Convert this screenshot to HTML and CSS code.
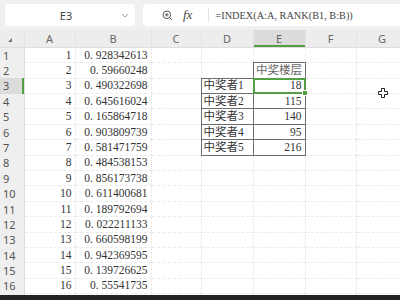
FILE: index.html
```html
<!DOCTYPE html>
<html lang="zh">
<head>
    <meta charset="UTF-8">
    <meta name="viewport" content="width=device-width, initial-scale=1.0">
    <title>中奖楼层</title>
    <link rel="stylesheet" href="styles.css">
</head>
<body>
    <div class="app">
        <div class="toolbar">
            <div class="name-box">
                <span class="cell-ref">E3</span>
                <svg class="chevron" width="8" height="5" viewBox="0 0 8 5"><path d="M1 1l3 3 3-3" fill="none" stroke="#a0a0a0" stroke-width="1"/></svg>
            </div>
            <div class="formula-bar">
                <svg class="zoom-icon" width="11" height="11" viewBox="0 0 11 11">
                    <circle cx="4.8" cy="4.8" r="3.8" fill="none" stroke="#555" stroke-width="1"/>
                    <path d="M3 4.8h3.6M4.8 3v3.6M7.5 7.5l2.5 2.5" fill="none" stroke="#555" stroke-width="1"/>
                </svg>
                <span class="fx">fx</span>
                <span class="divider"></span>
                <span class="formula">=INDEX(A:A, RANK(B1, B:B))</span>
            </div>
        </div>

        <div class="sheet-wrap">
            <table class="sheet">
                <colgroup>
                    <col class="c-head">
                    <col class="c-a">
                    <col class="c-b">
                    <col class="c-c">
                    <col class="c-d">
                    <col class="c-e">
                    <col class="c-f">
                    <col class="c-g">
                </colgroup>
                <thead>
                    <tr>
                        <th class="corner"><span class="corner-mark"></span></th>
                        <th>A</th><th>B</th><th>C</th><th>D</th><th class="active">E</th><th>F</th><th>G</th>
                    </tr>
                </thead>
                <tbody>
                    <tr><th>1</th><td class="num">1</td><td class="num">0. 928342613</td><td></td><td></td><td></td><td></td><td></td></tr>
                    <tr><th>2</th><td class="num">2</td><td class="num">0. 59660248</td><td></td><td></td><td class="box title">中奖楼层</td><td></td><td></td></tr>
                    <tr><th class="active">3</th><td class="num">3</td><td class="num">0. 490322698</td><td></td><td class="box">中奖者1</td><td class="box num sel">18</td><td></td><td></td></tr>
                    <tr><th>4</th><td class="num">4</td><td class="num">0. 645616024</td><td></td><td class="box">中奖者2</td><td class="box num">115</td><td></td><td></td></tr>
                    <tr><th>5</th><td class="num">5</td><td class="num">0. 165864718</td><td></td><td class="box">中奖者3</td><td class="box num">140</td><td></td><td></td></tr>
                    <tr><th>6</th><td class="num">6</td><td class="num">0. 903809739</td><td></td><td class="box">中奖者4</td><td class="box num">95</td><td></td><td></td></tr>
                    <tr><th>7</th><td class="num">7</td><td class="num">0. 581471759</td><td></td><td class="box">中奖者5</td><td class="box num">216</td><td></td><td></td></tr>
                    <tr><th>8</th><td class="num">8</td><td class="num">0. 484538153</td><td></td><td></td><td></td><td></td><td></td></tr>
                    <tr><th>9</th><td class="num">9</td><td class="num">0. 856173738</td><td></td><td></td><td></td><td></td><td></td></tr>
                    <tr><th>10</th><td class="num">10</td><td class="num">0. 611400681</td><td></td><td></td><td></td><td></td><td></td></tr>
                    <tr><th>11</th><td class="num">11</td><td class="num">0. 189792694</td><td></td><td></td><td></td><td></td><td></td></tr>
                    <tr><th>12</th><td class="num">12</td><td class="num">0. 022211133</td><td></td><td></td><td></td><td></td><td></td></tr>
                    <tr><th>13</th><td class="num">13</td><td class="num">0. 660598199</td><td></td><td></td><td></td><td></td><td></td></tr>
                    <tr><th>14</th><td class="num">14</td><td class="num">0. 942369595</td><td></td><td></td><td></td><td></td><td></td></tr>
                    <tr><th>15</th><td class="num">15</td><td class="num">0. 139726625</td><td></td><td></td><td></td><td></td><td></td></tr>
                    <tr><th>16</th><td class="num">16</td><td class="num">0. 55541735</td><td></td><td></td><td></td><td></td><td></td></tr>
                    <tr><th></th><td></td><td></td><td></td><td></td><td></td><td></td><td></td></tr>
                </tbody>
            </table>

            <svg class="cursor" width="10" height="10" viewBox="0 0 10 10">
                <path d="M3.5 0.5h3v3h3v3h-3v3h-3v-3h-3v-3h3z" fill="#fff" stroke="#222" stroke-width="1"/>
            </svg>
        </div>

        <div class="bottom-edge"></div>
    </div>
</body>
</html>
```

FILE: styles.css
```css
/* Reset */
* {
    margin: 0;
    padding: 0;
    box-sizing: border-box;
}

:root {
    --bar-bg: #f0f0f0;
    --head-bg: #ededed;
    --active-bg: #dcdcdc;
    --grid-line: #ebebeb;
    --box-line: #6e6e6e;
    --green: #52a043;
    --text: #333333;
    --cell-font: "Liberation Serif", "Noto Sans CJK SC", serif;
    --ui-font: "Noto Sans", "Liberation Sans", sans-serif;
}

body {
    background: #ffffff;
    font-family: var(--ui-font);
    color: var(--text);
}

.app {
    width: 400px;
    height: 300px;
    display: flex;
    flex-direction: column;
    overflow: hidden;
}

/* Toolbar */
.toolbar {
    height: 30px;
    flex-shrink: 0;
    background: var(--bar-bg);
    display: flex;
    gap: 8px;
    padding: 4px 0 4px 5px;
}

.name-box {
    width: 130px;
    background: #fff;
    border-radius: 4px;
    display: flex;
    align-items: center;
    padding-right: 6px;
}

.cell-ref {
    flex: 1;
    text-align: center;
    font-size: 11px;
    color: #444;
    padding-left: 6px;
}

.formula-bar {
    flex: 1;
    background: #fff;
    border-radius: 4px 0 0 4px;
    display: flex;
    align-items: center;
    padding-left: 19px;
}

.zoom-icon {
    flex-shrink: 0;
}

.fx {
    font-family: "Liberation Serif", serif;
    font-style: italic;
    font-size: 13px;
    color: #444;
    margin-left: 10px;
}

.divider {
    width: 1px;
    height: 14px;
    background: #e2e2e2;
    margin-left: 16px;
}

.formula {
    font-family: var(--cell-font);
    font-size: 10.3px;
    color: #444;
    margin-left: 6px;
    white-space: nowrap;
}

/* Sheet */
.sheet-wrap {
    flex: 1;
    position: relative;
    overflow: hidden;
}

.sheet {
    table-layout: fixed;
    width: 408px;
    border-collapse: collapse;
}

.c-head { width: 24px; }
.c-a { width: 51px; }
.c-b { width: 76px; }
.c-c { width: 50px; }
.c-d { width: 52px; }
.c-e { width: 52px; }
.c-f { width: 51px; }
.c-g { width: 52px; }

.sheet thead th {
    height: 17.3px;
    background: var(--head-bg);
    font-weight: normal;
    font-size: 11px;
    color: #666;
    border-right: 1px solid #e2e2e2;
    border-bottom: 1px solid #dedede;
}

.sheet thead th.active {
    background: var(--active-bg);
    box-shadow: inset 0 -2px 0 var(--green);
}

.corner {
    position: relative;
}

.corner-mark {
    position: absolute;
    left: 8px;
    top: 8px;
    width: 0;
    height: 0;
    border-left: 4px solid transparent;
    border-bottom: 4px solid #777;
}

.sheet tbody th {
    height: 15.4px;
    background: #efefef;
    font-weight: normal;
    font-size: 11px;
    color: #555;
    text-align: left;
    padding-left: 3px;
    border-right: 1px solid #dcdcdc;
}

.sheet tbody th.active {
    background: var(--active-bg);
    box-shadow: inset -2px 0 0 var(--green);
}

.sheet td {
    height: 15.4px;
    border: 1px dashed var(--grid-line);
    padding: 0 2px;
    font-family: var(--cell-font);
    font-size: 11.5px;
    line-height: 13px;
    white-space: nowrap;
    overflow: hidden;
    color: var(--text);
}

.sheet td.num {
    text-align: right;
    padding-right: 3px;
}

.sheet td.box {
    border: 1px solid var(--box-line);
}

.sheet td.title {
    text-align: center;
    color: #666;
    padding: 0;
}

/* Selected cell */
.sheet td.sel {
    position: relative;
    overflow: visible;
}

.sheet td.sel::after {
    content: "";
    position: absolute;
    top: -1px;
    left: -1px;
    right: -1px;
    bottom: -1px;
    border: 2px solid var(--green);
}

.sheet td.sel::before {
    content: "";
    position: absolute;
    right: -3px;
    bottom: -3px;
    width: 4px;
    height: 4px;
    background: var(--green);
    border: 1px solid #fff;
    z-index: 1;
}

.cursor {
    position: absolute;
    left: 378px;
    top: 58px;
}

.bottom-edge {
    height: 5px;
    flex-shrink: 0;
    background: #232323;
}
```
